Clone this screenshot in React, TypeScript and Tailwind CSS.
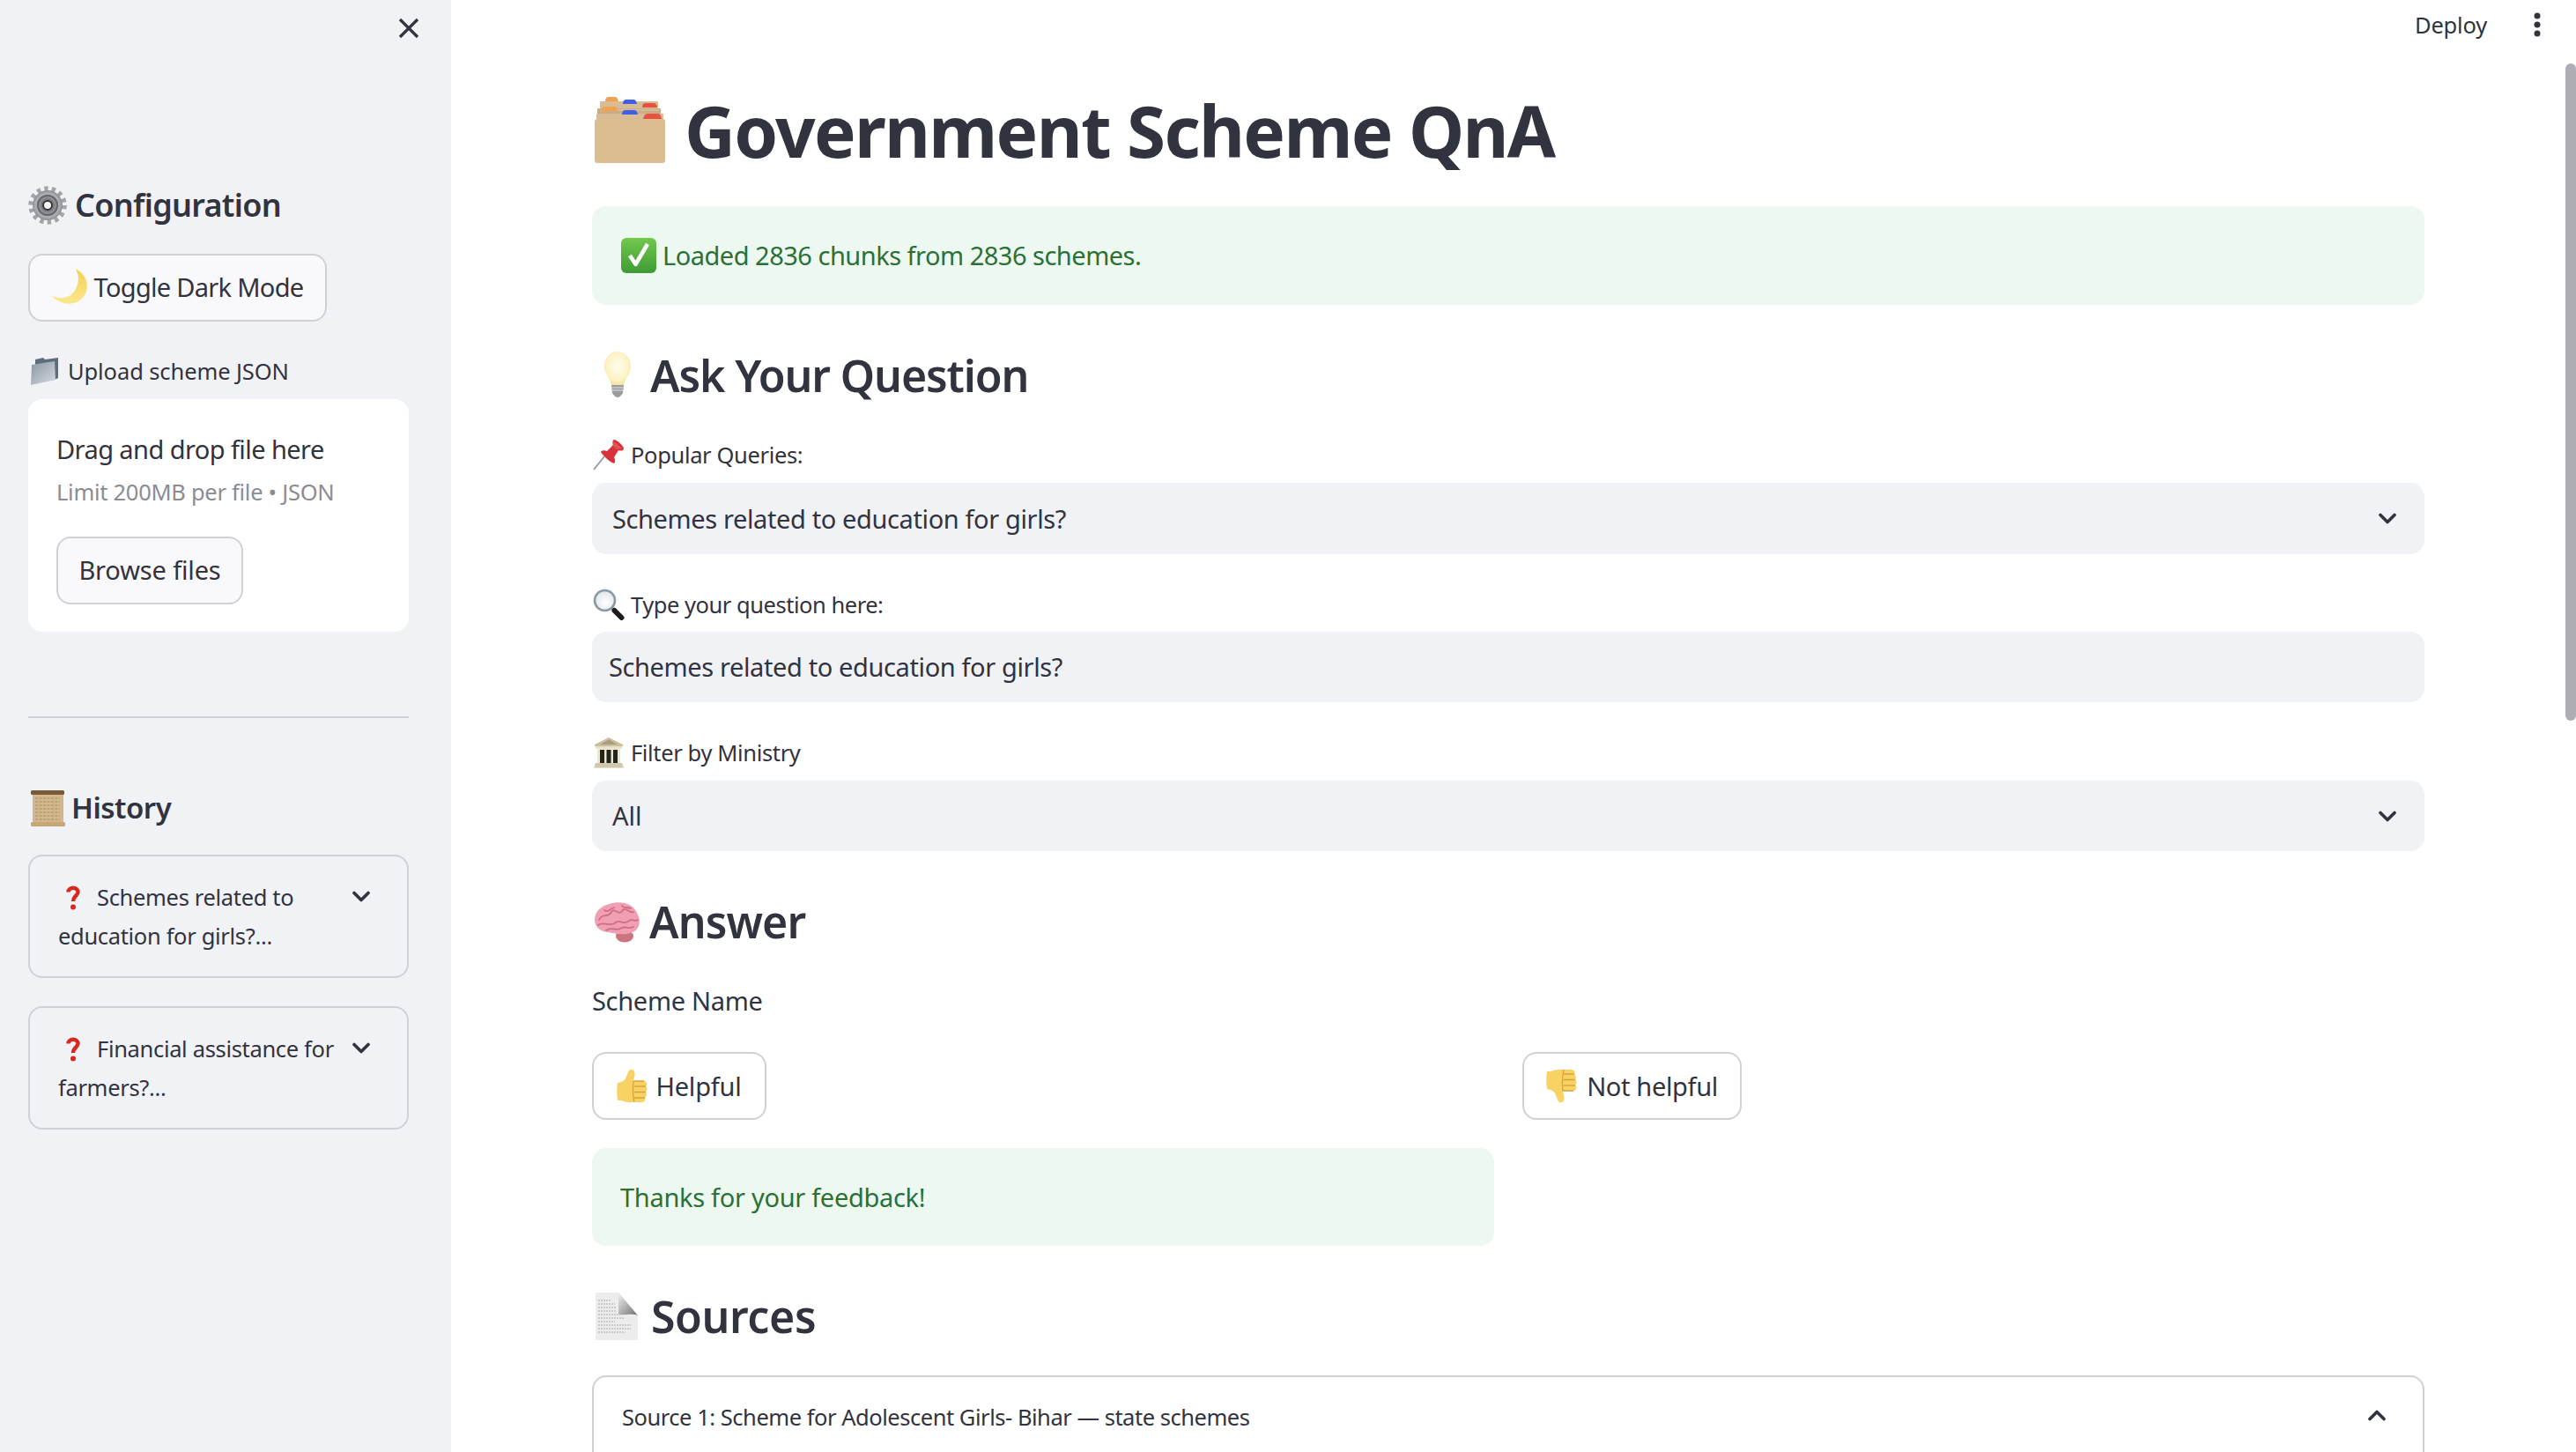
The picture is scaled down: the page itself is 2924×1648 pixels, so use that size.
import React from "react";

const Chevron = ({ up = false }: { up?: boolean }) => (
  <svg width="20" height="13" viewBox="0 0 20 13" className={up ? "rotate-180 shrink-0" : "shrink-0"}>
    <path d="M2 2.5 L10 10.5 L18 2.5" fill="none" stroke="#31333f" strokeWidth="3.6" strokeLinecap="round" strokeLinejoin="round" />
  </svg>
);

const CardBox = () => (
  <svg width="82" height="80" viewBox="0 0 82 80" className="shrink-0">
    <rect x="7" y="7" width="66" height="8" rx="1" fill="#d8bc95" />
    <rect x="4" y="15" width="72" height="6" fill="#c9ac84" />
    <rect x="8" y="16.500" width="66" height="1" fill="#e4cba8" />
    <rect x="3" y="21" width="76" height="6" fill="#d8bc95" />
    <path d="M13 7 Q13 2 17 2 H24 Q27 2 28 7Z" fill="#f0a24e" />
    <path d="M33 10 Q33 5 37 5 H45 Q48 5 49 10Z" fill="#3f5fe8" />
    <path d="M55 14 Q55 9 59 9 H68 Q71 9 72 14Z" fill="#e8503f" />
    <path d="M9 18 Q9 13 13 13 H23 Q26 13 27 18Z" fill="#f0a24e" />
    <path d="M32 22 Q32 17 36 17 H46 Q49 17 50 22Z" fill="#3f5fe8" />
    <path d="M56 27 Q57 21 61 21 H73 Q76 21 77 27Z" fill="#e8503f" />
    <rect x="1" y="27" width="80" height="50" rx="3" fill="#dcbd92" />
  </svg>
);

const Check = () => (
  <svg width="40" height="40" viewBox="0 0 40 40" className="shrink-0">
    <defs>
      <linearGradient id="chk" x1="0" y1="0" x2="0" y2="1">
        <stop offset="0" stopColor="#72c94e" />
        <stop offset="1" stopColor="#3f9a35" />
      </linearGradient>
    </defs>
    <rect x="0" y="0" width="40" height="40" rx="6" fill="url(#chk)" />
    <path d="M10 20 L16.5 30 L30 7" fill="none" stroke="#fff" strokeWidth="4.5" strokeLinejoin="round" />
  </svg>
);

const Bulb = () => (
  <svg width="32" height="54" viewBox="0 0 32 54" className="shrink-0">
    <defs>
      <radialGradient id="blb" cx=".5" cy=".45" r=".6">
        <stop offset="0" stopColor="#fffdf0" />
        <stop offset=".7" stopColor="#fdf3c4" />
        <stop offset="1" stopColor="#eeda94" />
      </radialGradient>
    </defs>
    <path d="M16 1 C25 1 31 9 31 18 C31 26 25 30 23 39 H9 C7 30 1 26 1 18 C1 9 7 1 16 1Z" fill="url(#blb)" />
    <path d="M9 39 H23 L22 48 Q19 53 16 53 Q13 53 10 48Z" fill="#9c9ca0" />
    <path d="M9.5 42 H22.5 M10 45 H22" stroke="#e4e4e6" strokeWidth="1.2" />
  </svg>
);

const Pin = () => (
  <svg width="36" height="35" viewBox="0 0 36 35" className="shrink-0">
    <path d="M1 34 L13 19" stroke="#8b96a8" strokeWidth="1.8" />
    <path d="M24 0 C27 0 35 7 35 10 C35 13 31 13 29 12 L24 20 C26 24 25 26 24 27 C20 26 12 19 9 14 C10 12 13 12 16 13 L23 6 C22 3 22 1 24 0Z" fill="#d8323a" />
    <path d="M24 2 L33 10 L27 11 L22 6Z" fill="#ee6a66" opacity=".6" />
  </svg>
);

const Magnifier = () => (
  <svg width="36" height="36" viewBox="0 0 36 36" className="shrink-0">
    <defs>
      <radialGradient id="mg" cx=".55" cy=".6" r=".6">
        <stop offset="0" stopColor="#ffffff" />
        <stop offset="1" stopColor="#dfe5ea" />
      </radialGradient>
    </defs>
    <circle cx="13.5" cy="13.5" r="11.5" fill="url(#mg)" stroke="#8d99a3" strokeWidth="2.6" />
    <path d="M21.5 22 L24 24.5" stroke="#8a8f94" strokeWidth="3" />
    <path d="M24.5 25 L32.5 33" stroke="#1d1d1f" strokeWidth="6" strokeLinecap="round" />
  </svg>
);

const Bank = () => (
  <svg width="36" height="35" viewBox="0 0 36 35" className="shrink-0">
    <path d="M18 0 L34 8 V10 H2 V8Z" fill="#c9c1a0" />
    <path d="M18 2.500 L28 8 H8Z" fill="#a89e7f" />
    <rect x="3" y="10" width="30" height="2.500" fill="#e5dfc4" />
    <rect x="5" y="12.500" width="26" height="17" fill="#ece7d2" />
    <rect x="8" y="14" width="5" height="15" fill="#25231d" />
    <rect x="15.500" y="14" width="5" height="15" fill="#25231d" />
    <rect x="23" y="14" width="5" height="15" fill="#25231d" />
    <path d="M3 29 H33 L35 34.500 H1Z" fill="#cfc8aa" />
  </svg>
);

const Brain = () => (
  <svg width="55" height="47" viewBox="0 0 55 47" className="shrink-0">
    <ellipse cx="37" cy="39.5" rx="10" ry="7" fill="#c9747f" />
    <path d="M4 26 C0 16 8 5 20 3 C30 -1 46 1 51 13 C56 22 54 32 46 35 C38 39 26 37 18 35 C10 34 6 31 4 26Z" fill="#f0a0b2" />
    <path d="M8 21 C12 12 18 20 22 12 C26 6 30 18 35 10 C39 6 42 14 47 12 M7 27 C14 22 20 30 27 24 C32 20 37 28 42 22 C45 19 48 24 52 21 M16 33 C22 28 28 35 34 30 C38 28 42 32 47 29 M14 10 C18 13 20 9 25 7 M34 5 C37 9 40 6 44 8" fill="none" stroke="#cf6d86" strokeWidth="1.8" strokeLinecap="round" />
  </svg>
);

const Thumb = ({ down = false }: { down?: boolean }) => (
  <svg width="35" height="39" viewBox="0 0 35 39" className={down ? "shrink-0 -scale-y-100" : "shrink-0"}>
    <path d="M15 1 C19 0 21 3 20.5 7 C20 10 19 12 19 14 H31 C35 14 35 19 33 20 C35 21.5 35 25.5 33 26.5 C34.500 28 34 32 32 33 C33 35 32 38 29 38 H14 C10 38 8 37 5 36 H1 C0 30 0 22 1 16 C4 15 8 15 10 11 C12 8 12 4 15 1Z" fill="#f8d264" />
    <path d="M19 14 H31 M20 20 H33 M20 26.500 H33 M20 33 H32 M19 14 C18 24 18 30 20 38" fill="none" stroke="#dba236" strokeWidth="1.3" />
  </svg>
);

const Page = () => (
  <svg width="48" height="54" viewBox="0 0 48 54" className="shrink-0">
    <defs>
      <linearGradient id="fld" x1="0" y1="0" x2="1" y2="1">
        <stop offset="0" stopColor="#f2f2f2" />
        <stop offset="1" stopColor="#6f6f6f" />
      </linearGradient>
    </defs>
    <path d="M0 0 H26 L48 26 V54 H0Z" fill="#ececec" />
    <path d="M26 0 L48 26 C40 23 30 27 26 24Z" fill="url(#fld)" />
    <path d="M3 9 H18 M3 13 H22 M3 17 H24 M3 21 H24 M3 25 H28 M3 29 H32 M3 33 H22 M3 37 H40 M3 41 H40 M3 45 H34" stroke="#a9a9a9" strokeWidth="1.2" strokeDasharray="2 1" />
  </svg>
);

const Gear = () => (
  <svg width="44" height="44" viewBox="0 0 44 44" className="shrink-0">
    <defs>
      <radialGradient id="gr" cx=".5" cy=".5" r=".5">
        <stop offset="0" stopColor="#f5f5f5" />
        <stop offset=".4" stopColor="#77787e" />
        <stop offset=".7" stopColor="#bdbdc1" />
        <stop offset="1" stopColor="#8d8e92" />
      </radialGradient>
    </defs>
    <circle cx="22" cy="22" r="18.500" fill="none" stroke="#a3a4a8" strokeWidth="6.5" strokeDasharray="4.2 4.1" />
    <circle cx="22" cy="22" r="17" fill="url(#gr)" />
    <circle cx="22" cy="22" r="11" fill="none" stroke="#6a6b71" strokeWidth="2.500" />
    <circle cx="22" cy="22" r="5" fill="#f4f4f4" stroke="#333" strokeWidth="2" />
  </svg>
);

const Moon = () => (
  <svg width="41" height="41" viewBox="0 0 40 40" className="shrink-0">
    <defs>
      <linearGradient id="mn" x1="0" y1="0" x2="0" y2="1">
        <stop offset="0" stopColor="#f4cf52" />
        <stop offset="1" stopColor="#fbe88e" />
      </linearGradient>
    </defs>
    <path d="M26 0 C36 5 41 15 38 25 C35 35 23 41 13 38 C7 36 3 34 0 30 C8 34 18 33 24 26 C30 18 31 8 26 0Z" fill="url(#mn)" />
  </svg>
);

const Folder = () => (
  <svg width="33" height="33" viewBox="0 0 33 33" className="shrink-0">
    <defs>
      <linearGradient id="fd" x1="0" y1="0" x2="1" y2="1">
        <stop offset="0" stopColor="#8a97a3" />
        <stop offset="1" stopColor="#d6dbe0" />
      </linearGradient>
    </defs>
    <path d="M6 3 L15 1 L17 3 L32 1 V24 L28 26 L6 28Z" fill="#5d6d7c" />
    <path d="M2 9 L28 5 L29 26 L1 32Z" fill="url(#fd)" />
  </svg>
);

const Scroll = () => (
  <svg width="41" height="41" viewBox="0 0 41 41" className="shrink-0">
    <rect x="3" y="4" width="35" height="33" fill="#d2b68c" />
    <path d="M6 9 H34 M6 13 H34 M6 17 H34 M6 21 H34 M6 25 H34 M6 29 H34 M6 33 H34" stroke="#a88c64" strokeWidth="1.2" strokeDasharray="3 1.500" />
    <rect x="1" y="0" width="38" height="5" rx="1.500" fill="#7a5a38" />
    <rect x="1" y="36" width="39" height="5" rx="1.500" fill="#c8a777" />
  </svg>
);

const Question = () => (
  <svg width="16" height="28" viewBox="0 0 16 28" className="shrink-0">
    <path d="M2.500 7.500 C2.500 1.500 13.500 1 13.500 7.500 C13.500 11.500 8 12 8 18" fill="none" stroke="#d9281e" strokeWidth="4.400" />
    <circle cx="8" cy="24.500" r="3" fill="#d9281e" />
  </svg>
);

const Field = ({ label, icon, className }: { label: string; icon: React.ReactNode; className: string }) => (
  <div className={"flex h-[40px] items-center text-[25.5px] " + className}>
    <span className="flex w-[44px] items-center pl-[1px]">{icon}</span>
    {label}
  </div>
);

const HistoryCard = ({ text, className }: { text: string; className: string }) => (
  <div className={"flex h-[140px] rounded-[16px] border-2 border-[#d0d1d6] pl-[32px] pt-[24px] " + className}>
    <div className="w-[325px] text-[25.5px] leading-[44px] tracking-[-0.33px]">
      <span className="ml-[9px] mr-[19px] inline-block align-[-5px]">
        <Question />
      </span>
      {text}
    </div>
    <div className="pt-[15px] pl-[9px]">
      <Chevron />
    </div>
  </div>
);

export default function App() {
  return (
    <div className="flex h-screen w-full overflow-hidden bg-white font-['Noto_Sans',sans-serif] text-[#31333f]">
      <aside className="flex w-[512px] shrink-0 flex-col bg-[#f0f2f6]">
        <div className="flex h-[64px] items-end justify-end pr-[36px] pb-[20px]">
          <svg width="24" height="24" viewBox="0 0 24 24">
            <path d="M2 2 L22 22 M22 2 L2 22" stroke="#31333f" strokeWidth="3.200" />
          </svg>
        </div>
        <div className="w-[432px] ml-[32px] flex flex-col">
          <div className="mt-[149px] flex h-[40px] items-center gap-[9px] text-[36px] font-semibold tracking-[-0.7px]">
            <Gear />
            Configuration
          </div>
          <button className="mt-[35px] flex h-[77px] w-[339px] items-center justify-center gap-[7px] rounded-[16px] border-2 border-[#d0d1d6] bg-[#f9f9fb] pb-[2px] text-[29px] tracking-[-0.7px]">
            <Moon />
            Toggle Dark Mode
          </button>
          <div className="mt-[36px] flex h-[40px] items-center gap-[10px] pl-[2px] text-[25.5px] tracking-[-0.1px]">
            <Folder />
            Upload scheme JSON
          </div>
          <div className="mt-[12px] h-[264px] rounded-[16px] bg-white pl-[32px] pt-[37px]">
            <div className="h-[40px] text-[29px] leading-[40px] tracking-[-0.57px]">Drag and drop file here</div>
            <div className="mt-[10px] h-[36px] text-[25.5px] leading-[36px] tracking-[-0.28px] text-[#8b8c93]">Limit 200MB per file • JSON</div>
            <button className="mt-[33px] h-[77px] w-[212px] rounded-[16px] border-2 border-[#d0d1d6] bg-[#f9f9fb] pb-[2px] text-[29px] tracking-[-0.15px]">Browse files</button>
          </div>
          <div className="mt-[96px] h-[2px] bg-[#d0d1d6]" />
          <div className="mt-[77px] flex h-[50px] items-center gap-[6px] pl-[2px] text-[33px] font-semibold tracking-[-0.5px]">
            <Scroll />
            History
          </div>
          <HistoryCard className="mt-[28px]" text="Schemes related to education for girls?..." />
          <HistoryCard className="mt-[32px]" text="Financial assistance for farmers?..." />
        </div>
      </aside>

      <main className="relative min-w-0 flex-1 pl-[160px] pr-[172px]">
        <div className="absolute right-[40px] top-0 flex h-[56px] items-center gap-[53px] text-[25.5px] tracking-[-0.2px]">
          <span>Deploy</span>
          <svg width="8" height="28" viewBox="0 0 8 28">
            <circle cx="4" cy="4" r="3.500" fill="#31333f" />
            <circle cx="4" cy="14" r="3.500" fill="#31333f" />
            <circle cx="4" cy="24" r="3.500" fill="#31333f" />
          </svg>
        </div>
        <div className="absolute right-0 top-[72px] h-[746px] w-[12px] rounded-[6px] bg-[#aeadb3]" />

        <div className="h-[56px]" />
        <div className="mt-[52px] flex h-[80px] items-center gap-[21px] pl-[2px] text-[80px] font-bold tracking-[-1.7px]">
          <CardBox />
          <span>Government Scheme QnA</span>
        </div>
        <div className="mt-[46px] flex h-[112px] items-center gap-[7px] rounded-[16px] bg-[#edf8f0] pl-[33px] text-[29px] tracking-[-0.5px] text-[#2a7038]">
          <Check />
          Loaded 2836 chunks from 2836 schemes.
        </div>
        <div className="mt-[52px] flex h-[54px] items-center gap-[21px] pl-[13px] text-[50px] font-semibold tracking-[-1.1px]">
          <Bulb />
          <span className="pt-[3px]">Ask Your Question</span>
        </div>
        <Field className="mt-[44px] tracking-[-0.35px]" label="Popular Queries:" icon={<Pin />} />
        <div className="mt-[12px] flex h-[81px] items-center justify-between rounded-[16px] bg-[#f0f2f6] pl-[23px] pr-[32px] text-[29px] tracking-[-0.38px]">
          Schemes related to education for girls?
          <Chevron />
        </div>
        <Field className="mt-[37px] tracking-[-0.47px]" label="Type your question here:" icon={<Magnifier />} />
        <div className="mt-[11px] flex h-[80px] items-center rounded-[16px] bg-[#f0f2f6] pl-[19px] text-[29px] tracking-[-0.38px]">
          Schemes related to education for girls?
        </div>
        <Field className="mt-[37px] tracking-[-0.36px]" label="Filter by Ministry" icon={<Bank />} />
        <div className="mt-[12px] flex h-[80px] items-center justify-between rounded-[16px] bg-[#f0f2f6] pl-[23px] pr-[32px] text-[29px]">
          All
          <Chevron />
        </div>
        <div className="mt-[57px] flex h-[46px] items-center gap-[10px] text-[50px] font-semibold tracking-[-0.9px]">
          <Brain />
          Answer
        </div>
        <div className="mt-[47px] h-[40px] text-[29px] leading-[40px] tracking-[-0.3px]">Scheme Name</div>
        <div className="mt-[38px] grid grid-cols-2 gap-[32px]">
          <div>
            <button className="flex h-[77px] w-[198px] items-center justify-center gap-[9px] rounded-[16px] border-2 border-[#d0d1d6] bg-white text-[29px] tracking-[-0.2px]">
              <Thumb />
              Helpful
            </button>
          </div>
          <div>
            <button className="flex h-[77px] w-[249px] items-center justify-center gap-[11px] rounded-[16px] border-2 border-[#d0d1d6] bg-white text-[29px] tracking-[-0.35px]">
              <Thumb down />
              Not helpful
            </button>
          </div>
        </div>
        <div className="mt-[32px] flex h-[111px] w-[1024px] items-center rounded-[16px] bg-[#edf8f0] pl-[32px] text-[29px] tracking-[-0.3px] text-[#2a7038]">
          Thanks for your feedback!
        </div>
        <div className="mt-[53px] flex h-[54px] items-center gap-[15px] pl-[4px] text-[50px] font-semibold tracking-[-0.4px]">
          <Page />
          Sources
        </div>
        <div className="mt-[40px] flex h-[200px] items-start justify-between rounded-[16px] border-2 border-[#d0d1d6] pl-[32px] pr-[42px] pt-[27px] text-[25.5px] tracking-[-0.47px]">
          <span className="leading-[36px]">Source 1: Scheme for Adolescent Girls- Bihar — state schemes</span>
          <div className="pt-[10px]">
            <Chevron up />
          </div>
        </div>
      </main>
    </div>
  );
}
